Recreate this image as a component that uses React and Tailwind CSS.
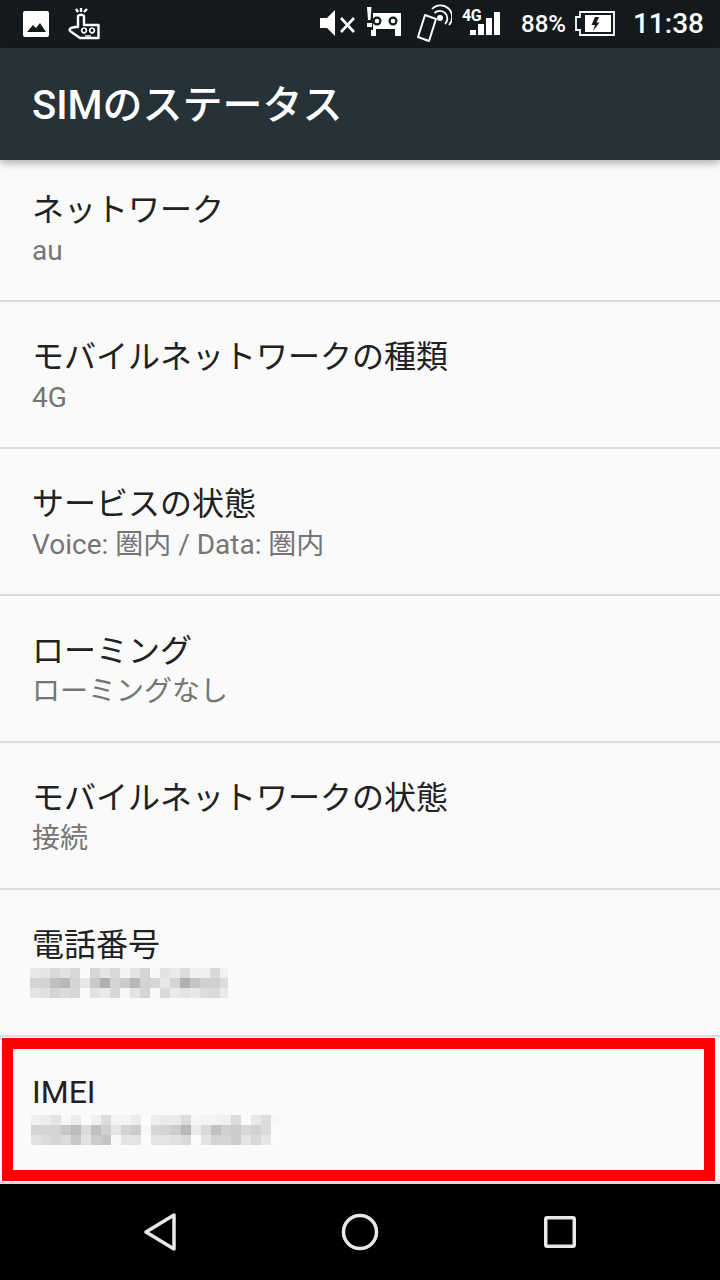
const rows = [
  { title: "ネットワーク", sub: "au" },
  { title: "モバイルネットワークの種類", sub: "4G" },
  { title: "サービスの状態", sub: "Voice: 圏内 / Data: 圏内" },
  { title: "ローミング", sub: "ローミングなし" },
  { title: "モバイルネットワークの状態", sub: "接続" },
];

const phoneMosaic = [
  ["e8", "e4", "d8", "e2", "d8", "fa", "d6", "e6", "d9", "f4", "e4", "d4", "f8", "e2", "ea", "dc", "f0", "f0", "d8", "f0"],
  ["d4", "d4", "c0", "b8", "d4", "e6", "c8", "b0", "d4", "cc", "b8", "d4", "d6", "e8", "d4", "b0", "c4", "d0", "d0", "dc"],
  ["e4", "e0", "d4", "dc", "d6", "fa", "e2", "ea", "d8", "f6", "e4", "d4", "f8", "da", "ea", "e4", "e8", "dc", "da", "ea"],
];

const imeiMosaic = [
  ["f0", "ec", "e4", "f8", "ec", "fb", "f0", "dc", "f4", "f4", "ec", "fb", "ee", "ea", "ea", "dc", "f6", "f4", "f2", "f0", "dc", "fb", "e8", "dc", "f6"],
  ["d4", "d4", "d4", "c8", "bc", "dc", "c0", "d0", "e6", "d4", "cc", "f8", "d6", "d4", "cc", "b8", "ea", "d8", "c0", "d0", "cc", "d8", "d2", "dc", "fb"],
  ["e2", "dc", "d4", "dc", "c8", "e2", "cc", "c4", "f8", "e4", "e4", "fb", "e4", "e4", "e0", "d8", "fb", "e4", "d4", "d4", "cc", "e4", "d8", "e6", "fb"],
];

function Mosaic({ cells, lastWidth }) {
  return (
    <div className="flex flex-col">
      {cells.map((row, i) => (
        <div key={i} className="flex h-[10px]">
          {row.map((c, j) => (
            <div
              key={j}
              className="h-[10px]"
              style={{
                backgroundColor: `#${c}${c}${c}`,
                width: j === row.length - 1 ? lastWidth : 10,
              }}
            />
          ))}
        </div>
      ))}
    </div>
  );
}

// status icons: viewBox uses screen coordinates so each one is just placed by x
function StatusBar() {
  const bg = "#14191c";
  return (
    <div className="h-12 bg-[#14191c] flex items-center text-white">
      <svg width="26" height="48" viewBox="23 0 26 48" className="ml-[23px]">
        <rect x="23" y="11" width="26" height="26" rx="2" fill="#fff" />
        <path d="M27 32 L33 25 L36 28 L40 23 L46 32 Z" fill={bg} />
      </svg>
      <svg width="36" height="48" viewBox="66 0 36 48" fill="none" stroke="#fff" className="ml-[17px]">
        <path
          d="M78 27 V16 Q81 13.5 84 16 V25 H98.5 V38 H80 L70 31 Q69 29 71 28 L75 27 Z"
          strokeWidth="2.4"
          strokeLinejoin="round"
        />
        <path d="M81 8 V12 M76 9 L78 12 M87 9 L84 12" strokeWidth="2.4" />
        <path d="M84 28 a2.4 2.4 0 1 0 .1 0 M84 32 V34 M92 28 a2.4 2.4 0 1 0 .1 0 M92 32 V34" strokeWidth="1.7" />
        <path d="M85 36 H91" strokeWidth="1.4" />
      </svg>
      <div className="flex-1" />
      <svg width="40" height="48" viewBox="318 0 40 48" className="mr-[6px]">
        <path d="M320 18 H327 L335 10 V36 L327 28 H320 Z" fill="#fff" />
        <path d="M341 18 L354 32 M354 18 L341 32" stroke="#fff" strokeWidth="2.6" />
      </svg>
      <svg width="40" height="48" viewBox="364 0 40 48" className="mr-[10px]">
        <path d="M367 7 H371.5 L370.5 20 H368 Z" fill="#fff" />
        <rect x="367" y="23" width="5" height="4" fill="#fff" />
        <path d="M373 13 H401 V36 H395 V29 H376 V36 H371 V30 H373 Z" fill="#fff" />
        <circle cx="377" cy="21" r="3.4" fill="#fff" stroke={bg} strokeWidth="2.2" />
        <circle cx="393" cy="21" r="3.4" fill="#fff" stroke={bg} strokeWidth="2.2" />
      </svg>
      <svg width="38" height="48" viewBox="414 0 38 48" fill="none" stroke="#fff" className="mr-[8px]">
        <path d="M425 15 L436 19 L429 41 L418 37 Z" strokeWidth="2" strokeLinejoin="round" />
        <circle cx="440" cy="18" r="3" fill="#fff" stroke="none" />
        <path d="M434.5 13 A7 7 0 1 1 445 24" strokeWidth="1.8" />
        <path d="M432 9 A11 11 0 1 1 449 25" strokeWidth="1.8" />
      </svg>
      <div className="relative w-[42px] h-12 mr-[19px]">
        <span className="absolute left-[2px] top-[8px] text-[16px] leading-[15px] tracking-[-0.5px] font-bold font-['Roboto',sans-serif]">
          4G
        </span>
        <svg width="42" height="48" viewBox="460 0 42 48" className="absolute inset-0">
          <rect x="470" y="30" width="6" height="5" fill="#fff" />
          <rect x="478" y="24" width="6" height="11" fill="#fff" />
          <rect x="486" y="18" width="6" height="17" fill="#fff" />
          <rect x="494" y="12" width="6" height="23" fill="#fff" />
        </svg>
      </div>
      <span className="text-[24px] leading-none font-medium font-['Roboto',sans-serif] mr-[7px]">88%</span>
      <svg width="43" height="48" viewBox="574 0 43 48" className="mr-[17px]">
        <path d="M581 12 H615 V35 H581 V30 H577 V17 H581 Z" fill="none" stroke="#fff" strokeWidth="1.8" />
        <rect x="586" y="15" width="26" height="17" fill="#fff" />
        <path d="M596 17 L592.5 25 H596 L594 31 L600.5 22.5 H597.5 L600 17 Z" fill={bg} />
      </svg>
      <span className="text-[28px] leading-none font-medium font-['Roboto',sans-serif] mr-[16px]">11:38</span>
    </div>
  );
}

function InfoRow({ title, sub, children, first }) {
  return (
    <div className={`${first ? "h-[142px] pt-[29px]" : "h-[147px] pt-[34px]"} border-b-2 border-[#dddddd] pl-8`}>
      <div className="text-[32px] leading-[42px] text-[#212121]">{title}</div>
      {sub ? <div className="-mt-[1px] text-[28px] leading-[42px] text-[#757575]">{sub}</div> : children}
    </div>
  );
}

export default function App() {
  return (
    <div className="w-[720px] h-[1280px] flex flex-col bg-[#fafafa] overflow-hidden font-['Roboto','Noto_Sans_CJK_JP',sans-serif]">
      <StatusBar />
      <div className="h-[112px] bg-[#263238] flex items-center pl-8 pt-[3px] relative z-10 shadow-[0_3px_8px_rgba(0,0,0,0.3)]">
        <h1 className="text-[40px] font-medium text-white leading-none">SIMのステータス</h1>
      </div>
      <div className="flex-1 flex flex-col">
        {rows.map((r, i) => (
          <InfoRow key={r.title} title={r.title} sub={r.sub} first={i === 0} />
        ))}
        <InfoRow title="電話番号">
          <div className="mt-[2px] -ml-[2px]">
            <Mosaic cells={phoneMosaic} lastWidth={8} />
          </div>
        </InfoRow>
        <div className="relative flex-1 pl-8 pt-[34px] border-b-2 border-[#dddddd]">
          <div className="text-[32px] leading-[42px] text-[#212121]">IMEI</div>
          <div className="mt-[2px] -ml-[1px]">
            <Mosaic cells={imeiMosaic} lastWidth={9} />
          </div>
          <div className="absolute left-[2px] top-[1px] w-[713px] h-[143px] border-[11px] border-[#ff0000]" />
        </div>
      </div>
      <div className="h-24 bg-black flex items-center justify-between px-[144px]">
        <svg width="32" height="38" viewBox="0 0 32 38" fill="none" stroke="#e8e8e8" strokeWidth="3.5" strokeLinejoin="round">
          <path d="M30 2 V36 L2 19 Z" />
        </svg>
        <svg width="38" height="38" viewBox="0 0 38 38" fill="none" stroke="#e8e8e8" strokeWidth="3.5">
          <circle cx="19" cy="19" r="16.5" />
        </svg>
        <svg width="32" height="32" viewBox="0 0 32 32" fill="none" stroke="#e8e8e8" strokeWidth="3.5" strokeLinejoin="round">
          <rect x="1.75" y="1.75" width="28.5" height="28.5" rx="1.5" />
        </svg>
      </div>
    </div>
  );
}
